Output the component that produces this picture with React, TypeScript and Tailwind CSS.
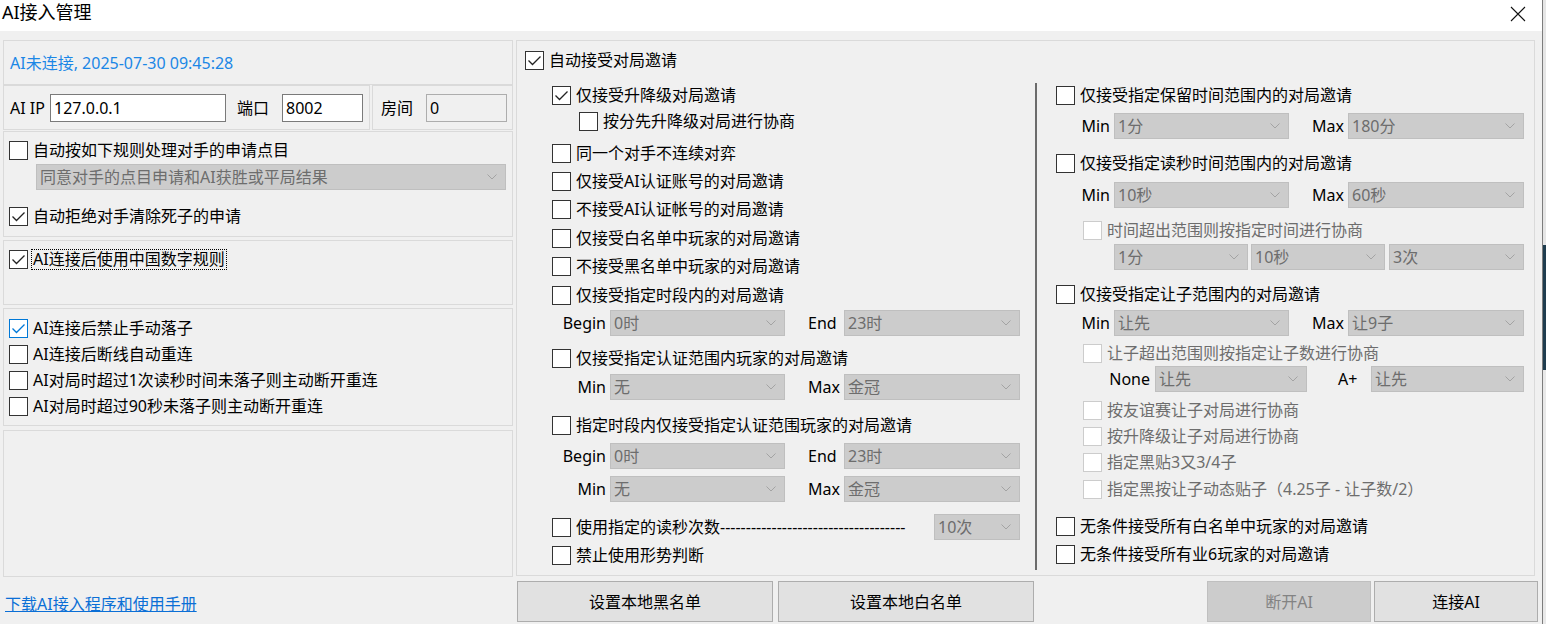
import React from "react";

type CheckProps = { on?: boolean; off?: boolean; blue?: boolean };

function Check({ on, off, blue }: CheckProps) {
  const border = off ? "border-[#cccccc]" : blue ? "border-[#0078d7]" : "border-[#333333]";
  return (
    <span className={`flex h-[19px] w-[19px] shrink-0 items-center justify-center border bg-white ${border}`}>
      {on && (
        <svg width="17" height="17" viewBox="0 0 17 17">
          <path d="M2.5 8.5 L6.5 12.5 L14.5 4.5" fill="none" stroke={blue ? "#0078d7" : "#222222"} strokeWidth="1.3" />
        </svg>
      )}
    </span>
  );
}

type RowProps = CheckProps & { label: string; focus?: boolean; cls?: string; h?: string };

function Row({ label, on, off, blue, focus, cls = "", h = "h-[28px]" }: RowProps) {
  return (
    <div className={`flex items-center ${h} ${cls}`}>
      <Check on={on} off={off} blue={blue} />
      {focus ? (
        <span className="ml-[3px] whitespace-nowrap border border-dotted border-black px-[1px] leading-[19px]">{label}</span>
      ) : (
        <span className={`ml-[5px] whitespace-nowrap ${off ? "text-[#6d6d6d]" : ""}`}>{label}</span>
      )}
    </div>
  );
}

function Sel({ v, w }: { v: string; w: string }) {
  return (
    <div
      className={`flex h-[26px] shrink-0 items-center justify-between border border-[#bfbfbf] bg-[#cccccc] pl-[3px] pr-[8px] text-[#6d6d6d] ${w}`}
    >
      <span className="whitespace-nowrap">{v}</span>
      <svg width="10" height="6" viewBox="0 0 10 6">
        <path d="M0.5 0.5 L5 5 L9.5 0.5" fill="none" stroke="#a3a3a3" strokeWidth="1" />
      </svg>
    </div>
  );
}

function Pair({ a, av, b, bv, cls = "" }: { a: string; av: string; b: string; bv: string; cls?: string }) {
  return (
    <div className={`flex h-[28px] items-center ${cls}`}>
      <span className="w-[54px] text-right">{a}</span>
      <div className="ml-[4px]">
        <Sel v={av} w="w-[175px]" />
      </div>
      <span className="w-[59px] pl-[23px]">{b}</span>
      <Sel v={bv} w="w-[176px]" />
    </div>
  );
}

function LeftColumn() {
  return (
    <div className="flex w-[510px] flex-col">
      <div className="flex h-[45px] items-center border border-[#dadada] pl-[6px] text-[#1b87e6]">
        AI未连接, 2025-07-30 09:45:28
      </div>
      <div className="flex h-[45px]">
        <div className="flex w-[367px] items-center border border-[#dadada] pl-[6px]">
          <span className="w-[40px] whitespace-nowrap">AI IP</span>
          <div className="flex h-[28px] w-[176px] items-center border border-[#7a7a7a] bg-white pl-[3px]">127.0.0.1</div>
          <span className="ml-[11px] w-[45px]">端口</span>
          <div className="flex h-[28px] w-[81px] items-center border border-[#7a7a7a] bg-white pl-[3px]">8002</div>
        </div>
        <div className="ml-[2px] flex flex-1 items-center border border-[#dadada] pl-[8px]">
          <span className="w-[45px]">房间</span>
          <div className="flex h-[28px] w-[81px] items-center border border-[#adadad] bg-[#f0f0f0] pl-[3px]">0</div>
        </div>
      </div>
      <div className="mt-[1px] flex h-[106px] flex-col border border-[#dadada] pl-[5px] pt-[5px]">
        <Row label="自动按如下规则处理对手的申请点目" h="h-[26px]" />
        <div className="ml-[27px] mt-[1px]">
          <Sel v="同意对手的点目申请和AI获胜或平局结果" w="w-[470px]" />
        </div>
        <Row label="自动拒绝对手清除死子的申请" on h="h-[26px]" cls="mt-[13px]" />
      </div>
      <div className="mt-[3px] flex h-[65px] flex-col border border-[#dadada] pl-[5px] pt-[5px]">
        <Row label="AI连接后使用中国数字规则" on focus h="h-[26px]" />
      </div>
      <div className="mt-[3px] flex h-[118px] flex-col border border-[#dadada] pl-[5px] pt-[6px]">
        <Row label="AI连接后禁止手动落子" on blue h="h-[26px]" />
        <Row label="AI连接后断线自动重连" h="h-[26px]" />
        <Row label="AI对局时超过1次读秒时间未落子则主动断开重连" h="h-[26px]" />
        <Row label="AI对局时超过90秒未落子则主动断开重连" h="h-[26px]" />
      </div>
      <div className="mt-[4px] h-[147px] border border-[#dadada]" />
      <div className="pl-[2px] pt-[17px]">
        <a className="cursor-pointer text-[#0b6fd6] underline">下载AI接入程序和使用手册</a>
      </div>
    </div>
  );
}

function InviteLeft() {
  return (
    <div className="ml-[27px] flex w-[483px] flex-col">
      <Row label="仅接受升降级对局邀请" on />
      <Row label="按分先升降级对局进行协商" h="h-[24px]" cls="ml-[27px]" />
      <Row label="同一个对手不连续对弈" cls="mt-[6px]" />
      <Row label="仅接受AI认证账号的对局邀请" />
      <Row label="不接受AI认证帐号的对局邀请" />
      <Row label="仅接受白名单中玩家的对局邀请" cls="mt-[1px]" />
      <Row label="不接受黑名单中玩家的对局邀请" />
      <Row label="仅接受指定时段内的对局邀请" cls="mt-[1px]" />
      <Pair a="Begin" av="0时" b="End" bv="23时" />
      <Row label="仅接受指定认证范围内玩家的对局邀请" cls="mt-[7px]" />
      <Pair a="Min" av="无" b="Max" bv="金冠" cls="mt-[1px]" />
      <Row label="指定时段内仅接受指定认证范围玩家的对局邀请" cls="mt-[10px]" />
      <Pair a="Begin" av="0时" b="End" bv="23时" cls="mt-[3px]" />
      <Pair a="Min" av="无" b="Max" bv="金冠" cls="mt-[5px]" />
      <div className="mt-[10px] flex h-[28px] w-[468px] items-center justify-between">
        <Row label="使用指定的读秒次数------------------------------------" />
        <Sel v="10次" w="w-[86px]" />
      </div>
      <Row label="禁止使用形势判断" />
    </div>
  );
}

function InviteRight() {
  return (
    <div className="flex flex-col pl-[19px]">
      <Row label="仅接受指定保留时间范围内的对局邀请" />
      <Pair a="Min" av="1分" b="Max" bv="180分" cls="mt-[3px]" />
      <Row label="仅接受指定读秒时间范围内的对局邀请" cls="mt-[9px]" />
      <Pair a="Min" av="10秒" b="Max" bv="60秒" cls="mt-[4px]" />
      <Row label="时间超出范围则按指定时间进行协商" off h="h-[26px]" cls="ml-[27px] mt-[8px]" />
      <div className="flex h-[28px] items-center pl-[58px]">
        <Sel v="1分" w="w-[134px]" />
        <div className="ml-[3px]">
          <Sel v="10秒" w="w-[134px]" />
        </div>
        <div className="ml-[4px]">
          <Sel v="3次" w="w-[135px]" />
        </div>
      </div>
      <Row label="仅接受指定让子范围内的对局邀请" cls="mt-[9px]" />
      <Pair a="Min" av="让先" b="Max" bv="让9子" cls="mt-[1px]" />
      <Row label="让子超出范围则按指定让子数进行协商" off h="h-[26px]" cls="ml-[27px] mt-[3px]" />
      <div className="flex h-[26px] items-center">
        <span className="w-[94px] text-right">None</span>
        <div className="ml-[5px]">
          <Sel v="让先" w="w-[152px]" />
        </div>
        <span className="w-[64px] pl-[31px]">A+</span>
        <Sel v="让先" w="w-[153px]" />
      </div>
      <Row label="按友谊赛让子对局进行协商" off h="h-[26px]" cls="ml-[27px] mt-[5px]" />
      <Row label="按升降级让子对局进行协商" off h="h-[26px]" cls="ml-[27px]" />
      <Row label="指定黑贴3又3/4子" off h="h-[26px]" cls="ml-[27px]" />
      <Row label="指定黑按让子动态贴子（4.25子 - 让子数/2）" off h="h-[26px]" cls="ml-[27px] mt-[1px]" />
      <Row label="无条件接受所有白名单中玩家的对局邀请" cls="mt-[10px]" />
      <Row label="无条件接受所有业6玩家的对局邀请" />
    </div>
  );
}

export default function App() {
  return (
    <div className="flex h-[624px] w-[1546px] overflow-hidden bg-[#f0f0f0] font-['Noto_Sans','Noto_Sans_CJK_SC',sans-serif] text-[16px] leading-[20px] text-black">
      <div className="flex w-[1543px] flex-col border-r border-[#7d7d7d]">
        <div className="flex h-[31px] shrink-0 items-start justify-between bg-white">
          <span className="pl-[2px] text-[18px] leading-[24px]">AI接入管理</span>
          <svg className="mr-[16px] mt-[6px]" width="16" height="16" viewBox="0 0 16 16">
            <path d="M1 1 L15 15 M15 1 L1 15" stroke="#111111" strokeWidth="1.1" />
          </svg>
        </div>
        <div className="flex flex-1 pl-[3px] pt-[9px]">
          <LeftColumn />
          <div className="ml-[3px] flex flex-col">
            <div className="flex h-[536px] w-[1019px] flex-col border border-[#dadada] pl-[8px] pt-[5px]">
              <Row label="自动接受对局邀请" on />
              <div className="mt-[7px] flex">
                <InviteLeft />
                <div className="mt-[2px] h-[487px] w-[2px] bg-[#6b6b6b]" />
                <InviteRight />
              </div>
            </div>
            <div className="mt-[5px] flex h-[41px]">
              <button className="ml-[1px] w-[256px] border border-[#adadad] bg-[#e1e1e1]">设置本地黑名单</button>
              <button className="ml-[5px] w-[256px] border border-[#adadad] bg-[#e1e1e1]">设置本地白名单</button>
              <button className="ml-[173px] w-[164px] border border-[#bfbfbf] bg-[#cccccc] text-[#838383]">断开AI</button>
              <button className="ml-[3px] w-[164px] border border-[#adadad] bg-[#e1e1e1]">连接AI</button>
            </div>
          </div>
        </div>
      </div>
      <div className="flex flex-1 flex-col">
        <div className="h-[245px] bg-[#e6e6e6]" />
        <div className="h-[125px] bg-[#1f3d4f]" />
        <div className="flex-1 bg-[#e9e9e9]" />
      </div>
    </div>
  );
}
